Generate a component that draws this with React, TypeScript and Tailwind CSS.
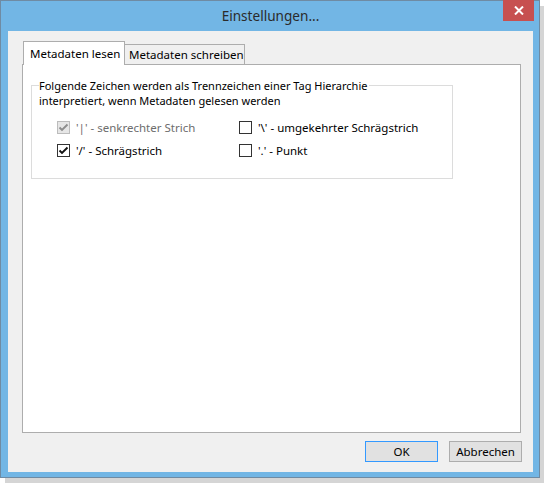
import type { ReactNode } from 'react'

type BoxState = 'checked' | 'unchecked' | 'disabledChecked'

function CheckBox({ state }: { state: BoxState }) {
  const disabled = state === 'disabledChecked'
  return (
    <span
      className={`flex items-center justify-center w-[13px] h-[13px] shrink-0 border ${
        disabled ? 'border-[#bcbcbc] bg-[#e6e6e6]' : 'border-[#333333] bg-white'
      }`}
    >
      {state !== 'unchecked' && (
        <svg width="11" height="11" viewBox="0 0 11 11">
          <path
            d="M1.5 5.5 L4 8 L9.5 2.5"
            fill="none"
            stroke={disabled ? '#8d8d8d' : '#111111'}
            strokeWidth="1.9"
          />
        </svg>
      )}
    </span>
  )
}

function Option({ state, children }: { state: BoxState; children: ReactNode }) {
  return (
    <div className="flex items-center h-[15px] gap-[6px] whitespace-nowrap">
      <CheckBox state={state} />
      <span className={state === 'disabledChecked' ? 'text-[#6d6d6d]' : 'text-black'}>{children}</span>
    </div>
  )
}

export default function App() {
  return (
    <div className="w-[544px] h-[483px] bg-white font-['Noto_Sans','Open_Sans',sans-serif] text-[11.5px] leading-[15px] text-black">
      <div className="relative w-[540px] h-[478px] border border-[#6f8ba3] bg-[#72b6e5] shadow-[5px_6px_0_#d5d5d5] flex flex-col pl-[7px] pr-[6px] pb-[5px]">
        {/* Title bar */}
        <div className="h-[30px] shrink-0 flex items-center justify-center text-[13.6px] text-[#2b2b2b] pb-[2px]">
          Einstellungen...
        </div>
        <div className="absolute top-[-1px] right-[5px] w-[31px] h-[21px] bg-[#c75050] flex items-center justify-center">
          <svg width="10" height="9" viewBox="0 0 10 9">
            <path d="M1 0.5 L9 8.5 M9 0.5 L1 8.5" stroke="white" strokeWidth="2" />
          </svg>
        </div>

        {/* Client area */}
        <div className="flex-1 bg-[#f0f0f0] pl-[14px] pt-[10px] flex flex-col">
          {/* Tabs */}
          <div className="flex items-end h-[23px] relative z-10 whitespace-nowrap">
            <div className="ml-[1px] w-[102px] h-[24px] -mb-px bg-white border border-b-0 border-[#adadad] pl-[6px] flex items-center">
              Metadaten lesen
            </div>
            <div className="w-[120px] h-[20px] bg-[#f0f0f0] border border-l-0 border-b-0 border-[#adadad] pl-[4px] flex items-center">
              Metadaten schreiben
            </div>
          </div>

          {/* Tab panel */}
          <div className="w-[499px] h-[369px] bg-white border border-[#adadad] pl-[8px] pt-[20px]">
            <div className="w-[422px] h-[94px] border border-[#dcdcdc] pl-[7px]">
              <p className="-mt-[8px] whitespace-nowrap text-[11px]">
                <span className="bg-white pr-[2px]">
                  Folgende Zeichen werden als Trennzeichen einer Tag Hierarchie
                </span>
                <br />
                interpretiert, wenn Metadaten gelesen werden
              </p>
              <div className="grid grid-cols-[182px_auto] gap-y-[8px] mt-[12px] pl-[18px]">
                <Option state="disabledChecked">'|' - senkrechter Strich</Option>
                <Option state="unchecked">'\' - umgekehrter Schrägstrich</Option>
                <Option state="checked">'/' - Schrägstrich</Option>
                <Option state="unchecked">'.' - Punkt</Option>
              </div>
            </div>
          </div>

          {/* Buttons */}
          <div className="flex justify-end gap-[11px] pr-[11px] mt-[8px]">
            <button type="button" className="w-[73px] h-[21px] bg-[#e1e1e1] border border-[#3399ff] text-black">
              OK
            </button>
            <button type="button" className="w-[73px] h-[21px] bg-[#e1e1e1] border border-[#adadad] text-black">
              Abbrechen
            </button>
          </div>
        </div>
      </div>
    </div>
  )
}
